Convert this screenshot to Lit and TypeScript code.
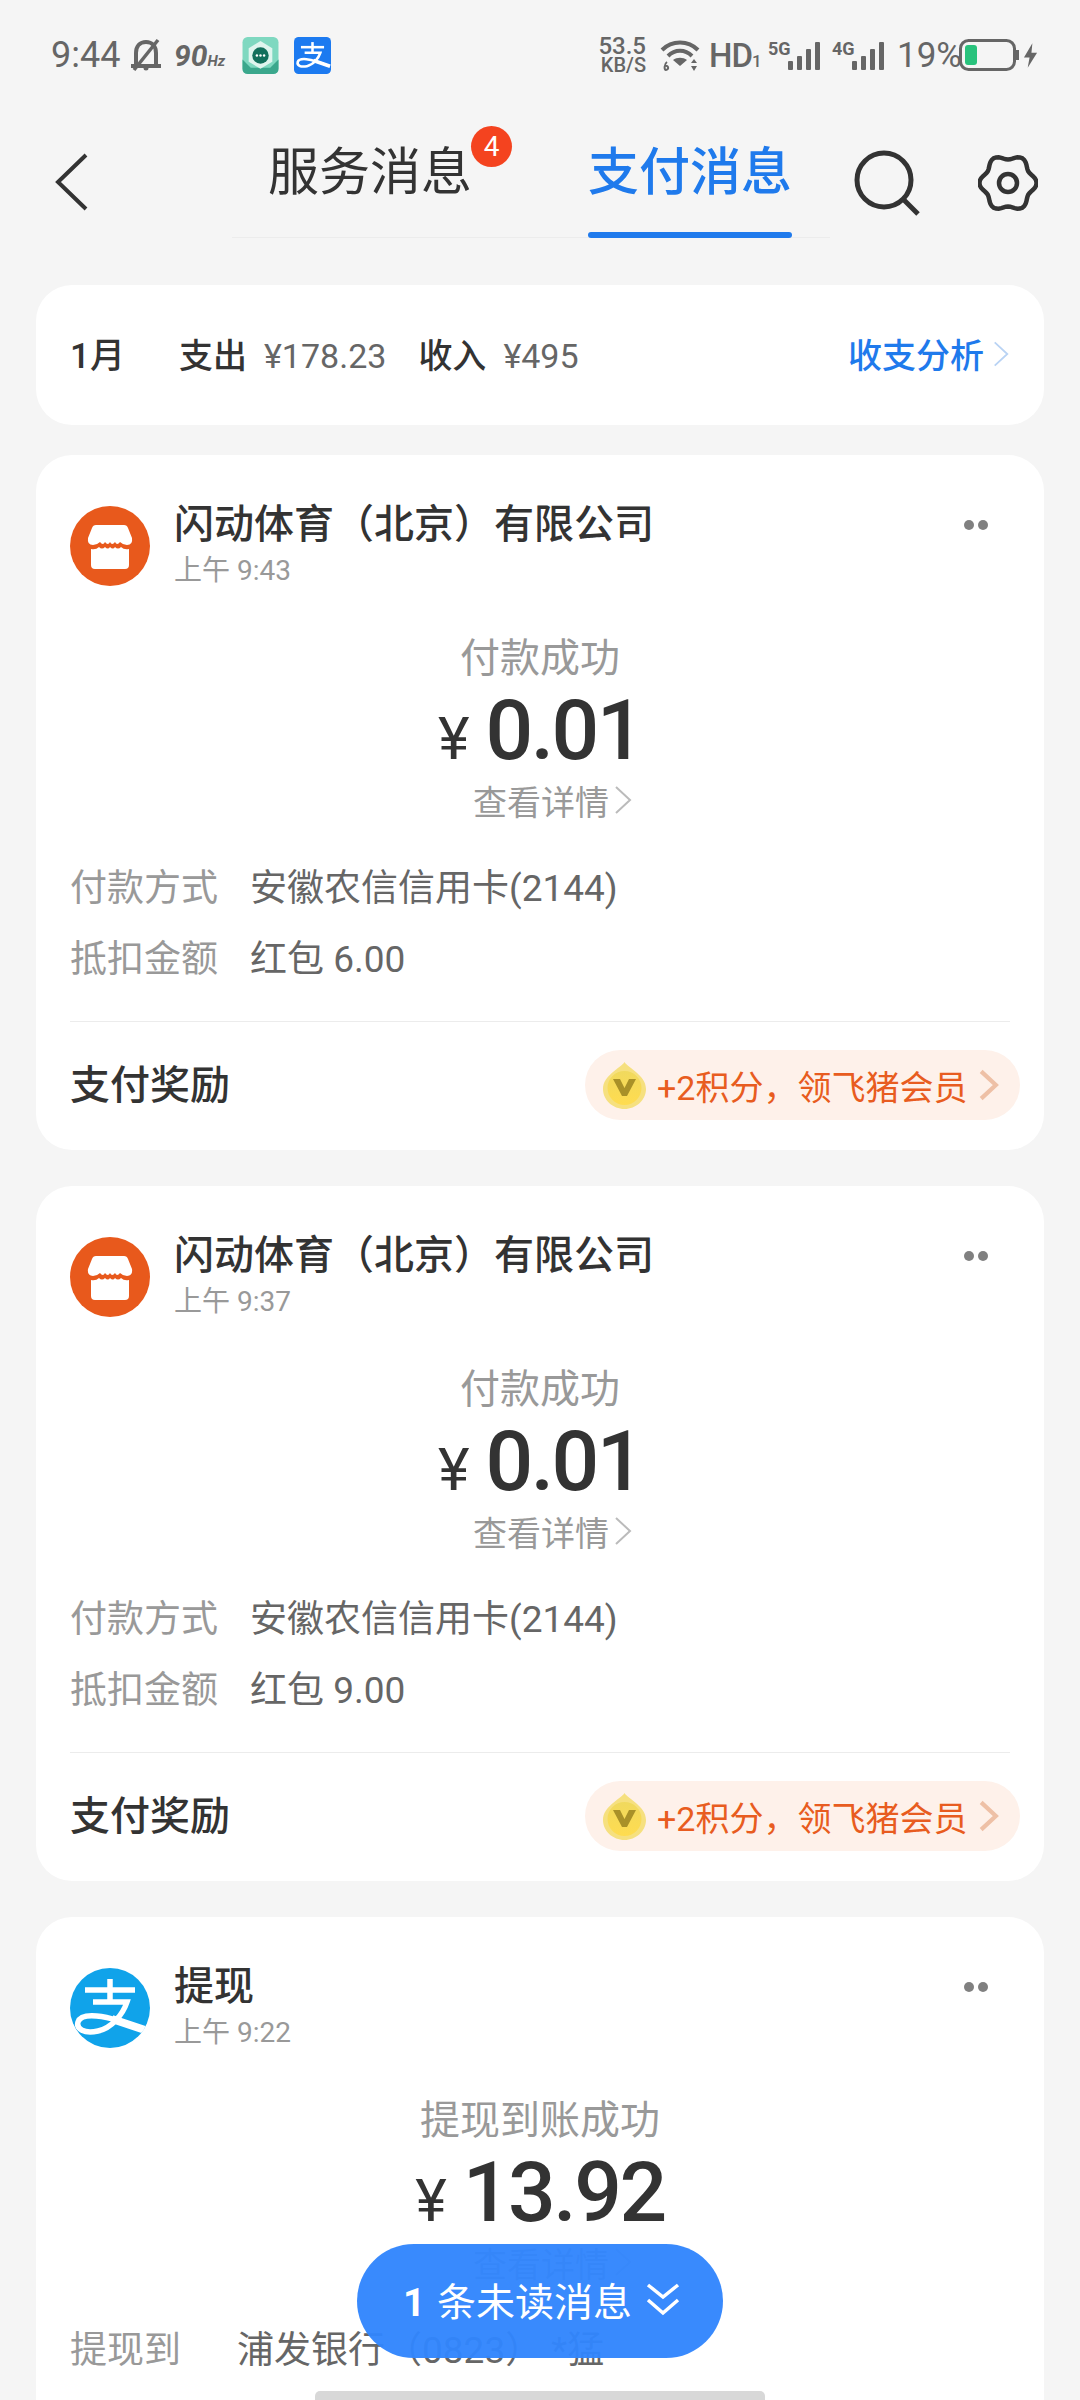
import { LitElement, html, css, svg } from "lit";
import { customElement } from "lit/decorators.js";

interface Bill {
  name: string;
  time: string;
  logo: "store" | "alipay";
  status: string;
  amount: string;
  rows: [string, string][];
  reward: boolean;
}

const bills: Bill[] = [
  {
    name: "闪动体育（北京）有限公司",
    time: "上午 9:43",
    logo: "store",
    status: "付款成功",
    amount: "0.01",
    rows: [
      ["付款方式", "安徽农信信用卡(2144)"],
      ["抵扣金额", "红包 6.00"],
    ],
    reward: true,
  },
  {
    name: "闪动体育（北京）有限公司",
    time: "上午 9:37",
    logo: "store",
    status: "付款成功",
    amount: "0.01",
    rows: [
      ["付款方式", "安徽农信信用卡(2144)"],
      ["抵扣金额", "红包 9.00"],
    ],
    reward: true,
  },
  {
    name: "提现",
    time: "上午 9:22",
    logo: "alipay",
    status: "提现到账成功",
    amount: "13.92",
    rows: [["提现到", "浦发银行（0823） *猛"]],
    reward: false,
  },
];

// six-lobed outline for the settings gear
function gearPath(cx: number, cy: number, r: number, wave: number) {
  const pts: string[] = [];
  for (let deg = 0; deg < 360; deg += 5) {
    const a = (deg * Math.PI) / 180;
    const rad = r + wave * Math.cos(6 * a);
    pts.push(`${(cx + rad * Math.cos(a)).toFixed(2)} ${(cy + rad * Math.sin(a)).toFixed(2)}`);
  }
  return `M${pts.join("L")}Z`;
}

const chevron = (w: number, h: number, color: string, sw = 2) => html`
  <svg width=${w} height=${h} viewBox="0 0 20 30" fill="none" stroke=${color} stroke-width=${sw}>
    <path d="M3 2 L17 15 L3 28" />
  </svg>
`;

const alipayMark = svg`
  <g fill="none" stroke="#fff" stroke-width="5.5">
    <path d="M15 22 H65" />
    <path d="M40 11 V34" />
    <path d="M23 34 H57 C53 46 42 60 28 63 C14 66 6 61 8 54 C11 45 32 44 76 63" />
    <path d="M42 51 L78 63" stroke-width="8" />
  </g>
`;

const bars = () => html`
  <svg width="32" height="28" viewBox="0 0 32 28" fill="#666">
    <rect x="0" y="19" width="5" height="9" rx="1" />
    <rect x="9" y="14" width="5" height="14" rx="1" />
    <rect x="18" y="7" width="5" height="21" rx="1" />
    <rect x="27" y="0" width="5" height="28" rx="1" />
  </svg>
`;

@customElement("app-root")
export class AppRoot extends LitElement {
  static styles = css`
    :host {
      display: block;
      position: relative;
      width: 1080px;
      height: 2400px;
      overflow: hidden;
      background: #f5f5f5;
      color: #333;
      font-family: Roboto, "Noto Sans CJK SC", sans-serif;
    }
    svg {
      display: block;
      flex: none;
    }

    /* status bar */
    .status {
      display: flex;
      align-items: center;
      height: 110px;
      padding-left: 51px;
      color: #666;
    }
    .clock {
      font-size: 36px;
      width: 78px;
    }
    .hz {
      margin-left: 11px;
      font-size: 30px;
      font-weight: 700;
      font-style: italic;
      width: 68px;
    }
    .hz small {
      font-size: 15px;
    }
    .app-icon {
      margin-right: 15px;
    }
    .speed {
      margin-left: 265px;
      width: 50px;
      font-weight: 500;
      text-align: right;
    }
    .speed b {
      display: block;
      font-size: 24px;
      font-weight: 500;
      line-height: 20px;
    }
    .speed span {
      display: block;
      font-size: 20px;
      line-height: 18px;
    }
    .wifi {
      margin-left: 14px;
    }
    .hd {
      flex: none;
      margin-left: 9px;
      width: 47px;
      font-size: 33px;
      font-weight: 500;
      letter-spacing: -1px;
    }
    .hd small {
      font-size: 17px;
    }
    .net {
      display: flex;
      flex: none;
      align-items: flex-end;
      margin-left: 12px;
      height: 30px;
    }
    .net i {
      align-self: flex-start;
      width: 20px;
      font-size: 18px;
      font-style: normal;
      font-weight: 700;
      line-height: 18px;
      white-space: nowrap;
    }
    .pct {
      flex: none;
      margin-left: 13px;
      width: 62px;
      font-size: 35px;
      white-space: nowrap;
    }
    .bolt {
      margin-left: 4px;
    }

    /* navigation */
    .nav {
      display: flex;
      align-items: flex-start;
      height: 175px;
      padding-left: 54px;
    }
    .back {
      margin-top: 43px;
    }
    .tabs {
      display: flex;
      width: 598px;
      height: 128px;
      margin-left: 144px;
      padding-left: 36px;
      box-sizing: border-box;
      border-bottom: 1px solid #ececec;
    }
    .tab {
      position: relative;
      height: 127px;
      font-size: 51px;
      line-height: 125px;
      white-space: nowrap;
    }
    .tab.on {
      margin-left: 116px;
      color: #1f7aec;
      font-weight: 500;
    }
    .tab.on::after {
      content: "";
      position: absolute;
      left: 0;
      right: 0;
      bottom: -1px;
      height: 6px;
      border-radius: 3px;
      background: #1f7aec;
    }
    .badge {
      position: absolute;
      left: 203px;
      top: 16px;
      width: 41px;
      height: 41px;
      border-radius: 50%;
      background: #f4431f;
      color: #fff;
      font-size: 28px;
      line-height: 41px;
      text-align: center;
    }
    .search {
      margin: 40px 0 0 24px;
    }
    .gear {
      margin: 43px 0 0 58px;
    }

    /* cards */
    .list {
      display: flex;
      flex-direction: column;
      gap: 36px;
      padding: 0 36px;
    }
    .card {
      background: #fff;
      border-radius: 36px;
    }
    .summary {
      display: flex;
      align-items: baseline;
      height: 140px;
      box-sizing: border-box;
      padding: 42px 34px 0;
      font-size: 34px;
      margin-bottom: -6px;
    }
    .summary .month {
      width: 78px;
      margin-right: 31px;
      color: #333;
      font-size: 35px;
      font-weight: 500;
    }
    .summary b {
      font-weight: 500;
      margin-right: 17px;
    }
    .summary span {
      color: #666;
      margin-right: 32px;
    }
    .analysis {
      display: flex;
      align-items: center;
      gap: 8px;
      margin-left: auto;
      color: #1f7aec;
      font-weight: 500;
    }

    .bill {
      position: relative;
      height: 695px;
      box-sizing: border-box;
      padding: 44px 34px 0;
    }
    .head {
      display: flex;
      gap: 24px;
    }
    .logo {
      margin-top: 7px;
    }
    .name {
      font-size: 40px;
      font-weight: 500;
      line-height: 52px;
    }
    .time {
      font-size: 28px;
      line-height: 40px;
      color: #999;
    }
    .more {
      position: absolute;
      right: 56px;
      top: 65px;
      display: flex;
      gap: 4px;
    }
    .more i {
      width: 10px;
      height: 10px;
      border-radius: 50%;
      background: #808080;
    }
    .status-text {
      margin-top: 41px;
      color: #999;
      font-size: 40px;
      line-height: 54px;
      text-align: center;
    }
    .amount {
      display: flex;
      align-items: baseline;
      justify-content: center;
      gap: 16px;
      height: 89px;
      line-height: 89px;
      font-size: 84px;
      font-weight: 500;
      letter-spacing: -2.5px;
      color: #333;
    }
    .amount small {
      font-size: 60px;
      font-weight: 400;
      letter-spacing: 0;
    }
    .detail {
      display: flex;
      align-items: center;
      justify-content: center;
      gap: 4px;
      padding-left: 26px;
      height: 50px;
      color: #999;
      font-size: 34px;
    }
    .rows {
      display: flex;
      flex-direction: column;
      gap: 21px;
      margin-top: 39px;
    }
    .row {
      display: flex;
      gap: 32px;
      font-size: 37px;
      line-height: 50px;
    }
    .row.short {
      gap: 56px;
    }
    .row label {
      color: #999;
    }
    .row span {
      color: #666;
    }
    .rule {
      height: 1px;
      margin-top: 36px;
      background: #ececec;
    }
    .reward {
      display: flex;
      align-items: center;
      justify-content: space-between;
      height: 120px;
      margin-right: -10px;
    }
    .reward b {
      font-size: 40px;
      font-weight: 500;
    }
    .pill {
      display: flex;
      align-items: center;
      width: 435px;
      height: 70px;
      margin-top: 6px;
      box-sizing: border-box;
      padding-left: 18px;
      border-radius: 35px;
      background: #fef1ea;
      color: #e85c20;
      font-size: 34px;
      white-space: nowrap;
    }
    .pill span {
      margin: 0 11px;
    }

    /* floating unread button and gesture bar */
    .unread {
      position: absolute;
      left: 357px;
      top: 2244px;
      display: flex;
      align-items: center;
      justify-content: center;
      gap: 14px;
      width: 366px;
      height: 114px;
      box-sizing: border-box;
      padding: 0 0 5px 3px;
      border-radius: 57px;
      background: rgba(49, 133, 253, 0.96);
      color: #fff;
      font-size: 39px;
    }
    .unread b {
      font-weight: 700;
      margin-right: 2px;
    }
    .home {
      position: absolute;
      left: 315px;
      top: 2391px;
      width: 450px;
      height: 9px;
      border-radius: 5px 5px 0 0;
      background: #d8d8d8;
    }
  `;

  private renderLogo(kind: Bill["logo"]) {
    if (kind === "alipay") {
      return html`
        <svg class="logo" width="80" height="80" viewBox="0 0 80 80">
          <defs>
            <clipPath id="disc"><circle cx="40" cy="40" r="40" /></clipPath>
          </defs>
          <circle cx="40" cy="40" r="40" fill="#10a3ea" />
          <g clip-path="url(#disc)">${alipayMark}</g>
        </svg>
      `;
    }
    return html`
      <svg class="logo" width="80" height="80" viewBox="0 0 80 80">
        <circle cx="40" cy="40" r="40" fill="#e8591c" />
        <path
          fill="#fff"
          d="M26 19 H54 Q57 19 58 22 L62 32 Q63 39 57 39 Q53 39 50 36 Q47 40 45 36 Q42 40 40 36 Q38 40 35 36 Q33 40 30 36 Q27 39 23 39 Q17 39 18 32 L22 22 Q23 19 26 19Z"
        />
        <path
          fill="#fff"
          d="M21 43 Q26 44 29 41 Q32 44 35 41 Q38 44 40 41 Q43 44 45 41 Q48 44 51 41 Q54 44 59 43 V59 Q59 63 55 63 H25 Q21 63 21 59Z"
        />
      </svg>
    `;
  }

  private renderBill(b: Bill) {
    return html`
      <section class="card bill">
        <div class="head">
          ${this.renderLogo(b.logo)}
          <div>
            <div class="name">${b.name}</div>
            <div class="time">${b.time}</div>
          </div>
        </div>
        <div class="more"><i></i><i></i></div>
        <div class="status-text">${b.status}</div>
        <div class="amount"><small>¥</small>${b.amount}</div>
        <div class="detail">查看详情 ${chevron(20, 30, "#bbb")}</div>
        <div class="rows">
          ${b.rows.map(
            ([k, v]) =>
              html`<div class="row ${k.length < 4 ? "short" : ""}"><label>${k}</label><span>${v}</span></div>`
          )}
        </div>
        ${b.reward
          ? html`
              <div class="rule"></div>
              <div class="reward">
                <b>支付奖励</b>
                <div class="pill">
                  <svg width="43" height="47" viewBox="0 0 43 47">
                    <defs>
                      <linearGradient id="coin" x1="0" y1="0" x2="0" y2="1">
                        <stop offset="0" stop-color="#f0d95e" />
                        <stop offset="1" stop-color="#ffdc4f" />
                      </linearGradient>
                    </defs>
                    <path
                      fill="#f6e07f"
                      d="M21.5 0 C25 6 43 13 43 27 C43 38 33 47 21.5 47 C10 47 0 38 0 27 C0 13 18 6 21.5 0Z"
                    />
                    <circle cx="21.5" cy="26" r="17" fill="url(#coin)" />
                    <path fill="#a99128" d="M10 17 H17 L21.5 26 L26 17 H33 L24 34 H19Z" />
                  </svg>
                  <span>+2积分，领飞猪会员</span>
                  ${chevron(21, 36, "#eec0a6", 4)}
                </div>
              </div>
            `
          : ""}
      </section>
    `;
  }

  render() {
    return html`
      <header class="status">
        <span class="clock">9:44</span>
        <svg width="34" height="36" viewBox="0 0 34 34" fill="none" stroke="#666" stroke-width="4">
          <path d="M7 27 V15 C7 8 11 4 17 4 C23 4 27 8 27 15 V27" />
          <path d="M2 28 H32" />
          <path d="M29 2 L5 32" stroke-width="3.5" />
          <circle cx="17" cy="30" r="2.5" fill="#666" stroke="none" />
        </svg>
        <span class="hz">90<small>Hz</small></span>
        <svg class="app-icon" width="37" height="37" viewBox="0 0 35 36">
          <rect width="35" height="36" rx="5" fill="#7fd8c0" />
          <path d="M0 22 L8 30 H27 L35 22 V31 Q35 36 30 36 H5 Q0 36 0 31Z" fill="#3ba78c" />
          <path d="M17.5 4 L29 11 V24 L17.5 31 L6 24 V11Z" fill="#dff5ee" />
          <circle cx="17.5" cy="18" r="8" fill="#12705c" />
          <circle cx="14" cy="18" r="1.2" fill="#fff" />
          <circle cx="17.5" cy="18" r="1.2" fill="#fff" />
          <circle cx="21" cy="18" r="1.2" fill="#fff" />
        </svg>
        <svg width="37" height="37" viewBox="0 0 80 80">
          <rect width="80" height="80" rx="10" fill="#1c7af0" />
          ${alipayMark}
        </svg>
        <div class="speed"><b>53.5</b><span>KB/S</span></div>
        <svg class="wifi" width="40" height="34" viewBox="0 0 40 34" fill="none" stroke="#666" stroke-width="4">
          <path d="M2 12 C12 2 28 2 38 12" />
          <path d="M8 18 C15 11 25 11 32 18" />
          <path d="M20 28 L13 22 C17 19 23 19 27 22Z" fill="#666" stroke="none" />
          <path d="M34 21 L37 25 H31Z M34 33 L37 28 H31Z" fill="#666" stroke="none" />
          <path d="M7 24 C4 26 4 32 6 32 C9 32 9 27 5 28" stroke-width="2" />
        </svg>
        <span class="hd">HD<small>1</small></span>
        <div class="net"><i>5G</i>${bars()}</div>
        <div class="net"><i>4G</i>${bars()}</div>
        <span class="pct">19%</span>
        <svg width="60" height="32" viewBox="0 0 60 32" fill="none">
          <rect x="1.5" y="1.5" width="54" height="29" rx="8" stroke="#666" stroke-width="3" />
          <rect x="6" y="6" width="12" height="20" rx="3" fill="#28c27c" />
          <rect x="57" y="11" width="3" height="10" fill="#666" />
        </svg>
        <svg class="bolt" width="15" height="25" viewBox="0 0 16 26" fill="#666">
          <path d="M10 0 L1 15 H7 L5 26 L15 10 H9Z" />
        </svg>
      </header>

      <nav class="nav">
        <svg class="back" width="34" height="58" viewBox="0 0 34 58" fill="none" stroke="#333" stroke-width="4">
          <path d="M32 2 L4 29 L32 56" />
        </svg>
        <div class="tabs">
          <div class="tab">服务消息<span class="badge">4</span></div>
          <div class="tab on">支付消息</div>
        </div>
        <svg class="search" width="66" height="66" viewBox="0 0 66 66" fill="none" stroke="#333" stroke-width="5">
          <circle cx="30" cy="30" r="27" />
          <path d="M50 50 L64 64" />
        </svg>
        <svg class="gear" width="60" height="60" viewBox="0 0 60 60" fill="none" stroke="#333" stroke-width="4.5">
          <path d=${gearPath(30, 30, 26, 2.6)} />
          <circle cx="30" cy="30" r="9" />
        </svg>
      </nav>

      <main class="list">
        <div class="card summary">
          <span class="month">1月</span>
          <b>支出</b><span>¥178.23</span>
          <b>收入</b><span>¥495</span>
          <div class="analysis">收支分析 ${chevron(18, 30, "#b9d3f4")}</div>
        </div>
        ${bills.map((b) => this.renderBill(b))}
      </main>

      <div class="unread">
        <span><b>1</b> 条未读消息</span>
        <svg width="34" height="34" viewBox="0 0 34 34" fill="none" stroke="#fff" stroke-width="3.5">
          <path d="M2 3 L17 15 L32 3" />
          <path d="M2 18 L17 31 L32 18" />
        </svg>
      </div>
      <div class="home"></div>
    `;
  }
}
